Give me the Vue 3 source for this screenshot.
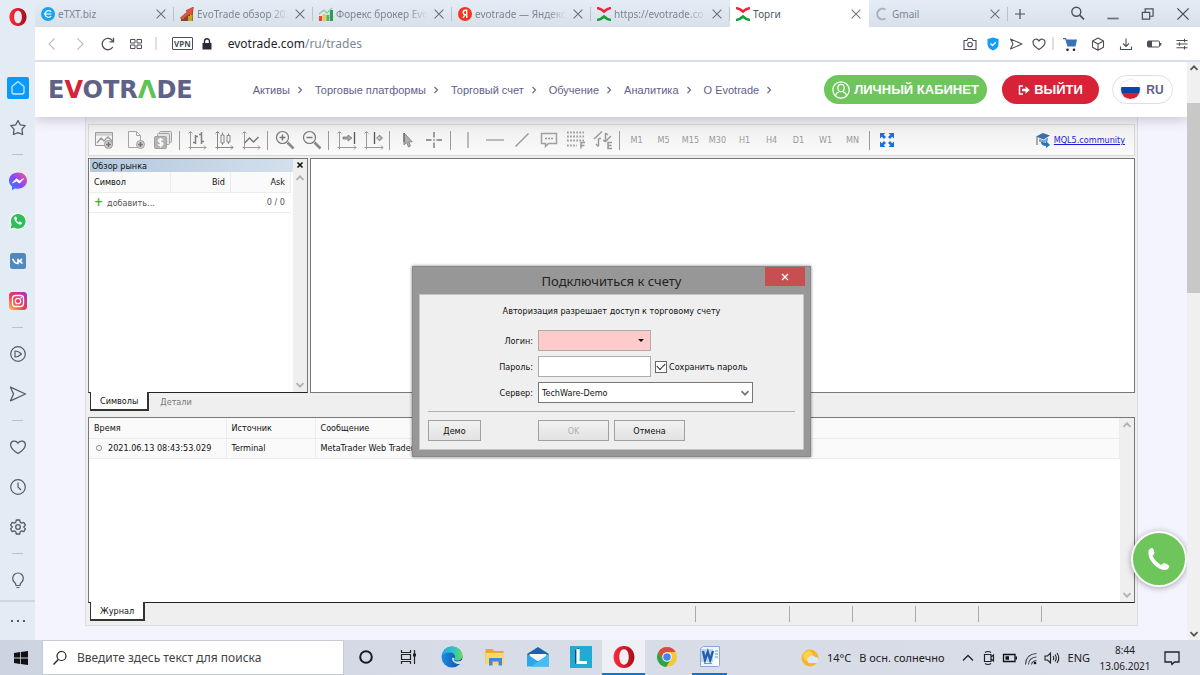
<script setup>
import { ref } from 'vue'

const tabs = [
  { title: 'eTXT.biz', icon: 'fav-etxt' },
  { title: 'EvoTrade обзор 20', icon: 'fav-stairs', fade: true },
  { title: 'Форекс брокер Evo', icon: 'fav-chart', fade: true },
  { title: 'evotrade — Яндекс', icon: 'fav-yandex', fade: true },
  { title: 'https://evotrade.co', icon: 'fav-evo', fade: true },
  { title: 'Торги', icon: 'fav-evo', active: true },
  { title: 'Gmail', icon: 'fav-loading' },
]
const side = [
  { icon: 's-home', label: 'Главная' },
  { icon: 's-star', label: 'Закладки' },
  null,
  { icon: 's-messenger', label: 'Messenger' },
  { icon: 's-whatsapp', label: 'WhatsApp' },
  { icon: 's-vk', label: 'ВКонтакте' },
  { icon: 's-insta', label: 'Instagram' },
  null,
  { icon: 's-player', label: 'Плеер' },
  { icon: 's-send', label: 'Моя лента' },
  null,
  { icon: 's-heart', label: 'Избранное' },
  { icon: 's-clock', label: 'История' },
  { icon: 's-gear', label: 'Настройки' },
  null,
  { icon: 's-bulb', label: 'Советы' },
]
const nav = ['Активы', 'Торговые платформы', 'Торговый счет', 'Обучение', 'Аналитика', 'О Evotrade']
const tools = [
  't-new', 'gap', 't-doc', 't-money', '|', 't-bars', 't-candles', 't-line', '|', 't-zoomin', 't-zoomout', '|',
  't-shift', 't-scroll', '|', 't-cursor', 't-cross', '|', 't-vline', 't-hline', 't-trend', 't-text', 't-fibo', 't-shapes', '|',
]
const frames = ['M1', 'M5', 'M15', 'M30', 'H1', 'H4', 'D1', 'W1', 'MN']
const apps = [
  { icon: 'w-cortana', label: 'Cortana' },
  { icon: 'w-tasks', label: 'Представление задач' },
  { icon: 'w-edge', label: 'Edge' },
  { icon: 'w-folder', label: 'Проводник' },
  { icon: 'w-mail', label: 'Почта' },
  { icon: 'w-l', label: 'L' },
  { icon: 's-opera', label: 'Opera', state: 'current' },
  { icon: 'w-chrome', label: 'Chrome' },
  { icon: 'w-word', label: 'Word', state: 'open' },
]
const login = ref('')
const password = ref('')
const remember = ref(true)
const server = ref('TechWare-Demo')
</script>

<template>
  <div class="screen">
    <svg class="defs" aria-hidden="true">
      <linearGradient id="g-red" x1="0" x2="1"><stop offset="0" stop-color="#ff2a3a" /><stop offset="1" stop-color="#a80d1b" /></linearGradient>
      <linearGradient id="g-msg" x1="0" y1="1" x2="1" y2="0"><stop offset="0" stop-color="#1a8cff" /><stop offset=".5" stop-color="#8a46ff" /><stop offset="1" stop-color="#ff5a78" /></linearGradient>
      <linearGradient id="g-ins" x1="0" y1="1" x2="1" y2="0"><stop offset="0" stop-color="#ffc34d" /><stop offset=".45" stop-color="#f0385a" /><stop offset="1" stop-color="#9a36c8" /></linearGradient>
      <linearGradient id="g-edge" x1="0" x2="1"><stop offset="0" stop-color="#2aa6e6" /><stop offset=".6" stop-color="#2fc4c4" /><stop offset="1" stop-color="#6fdc50" /></linearGradient>
      <linearGradient id="g-edge2" x1="0" x2="1"><stop offset="0" stop-color="#1d8be0" /><stop offset="1" stop-color="#0c4da8" /></linearGradient>

      <symbol id="fav-etxt" viewBox="0 0 14 14"><circle cx="7" cy="7" r="7" fill="#12a5f4" /><path d="M10.200 9.300Q7.500 11.300 5 9.300 3 7 5 4.700 7.500 2.700 10.200 4.700M3 7h7.500" fill="none" stroke="#fff" stroke-width="1.200" /></symbol>
      <symbol id="fav-stairs" viewBox="0 0 14 14"><path d="M1 14v-2h3v-3h3V6h3V3h3v11z" fill="#7b4a2a" /><path d="M8 14V9h2V6h2.500v8z" fill="#c9a227" /><path d="M0 11L7 5 6 3.500 13.500 0 12 8 10.500 6.500 3 12z" fill="#e2533a" stroke="#a53222" stroke-width=".5" /></symbol>
      <symbol id="fav-chart" viewBox="0 0 14 14"><path d="M0 9h3v5H0z" fill="#e2473f" /><path d="M3.700 7h3v7h-3z" fill="#f4c53c" /><path d="M7.300 8h3v6h-3z" fill="#55b26a" /><path d="M10.900 3H14v11h-3.100z" fill="#2f9c55" /><path d="M0 7l5-4 3 3 5-5" fill="none" stroke="#7ccf9a" stroke-width="1.300" /></symbol>
      <symbol id="fav-yandex" viewBox="0 0 14 14"><circle cx="7" cy="7" r="7" fill="#f33422" /><path d="M8.700 11V3.200H7.500Q5.200 3.300 5.200 5.500 5.200 7.300 7 7.700h1.700M7 7.600L5 11" fill="none" stroke="#fff" stroke-width="1.400" /></symbol>
      <symbol id="fav-evo" viewBox="0 0 14 14"><path d="M1 1.200Q4 1.600 7 4.500 10 1.600 13 1.200" fill="none" stroke="#ee2536" stroke-width="2.500" stroke-linecap="round" /><path d="M1 12.800Q4 12.400 7 9.500 10 12.400 13 12.800" fill="none" stroke="#14a038" stroke-width="2.500" stroke-linecap="round" /></symbol>
      <symbol id="fav-loading" viewBox="0 0 14 14"><path d="M10.500 2.600A5.300 5.300 0 1 0 10.500 11.400" fill="none" stroke="#aab2bd" stroke-width="2" /></symbol>

      <symbol id="s-opera" viewBox="0 0 20 20"><path fill-rule="evenodd" fill="url(#g-red)" d="M10 0C4.500 0 0.500 4.300 0.500 10S4.500 20 10 20 19.500 15.700 19.500 10 15.500 0 10 0zM10 3C12.700 3 14.300 6 14.300 10S12.700 17 10 17 5.700 14 5.700 10 7.300 3 10 3z" /></symbol>
      <symbol id="s-home" viewBox="0 0 22 22"><rect width="22" height="22" rx="2" fill="#0a99ff" /><path d="M5 9.500L11 4.500l6 5V15q0 2-2 2H7q-2 0-2-2z" fill="none" stroke="#c7ebff" stroke-width="1.300" /></symbol>
      <symbol id="s-star" viewBox="0 0 22 22"><path d="M11 3.500l2.200 4.300 5 .8-3.200 3.500.6 5.400-4.600-1.800-4.600 1.800.6-5.400L3.800 8.600l5-.8z" fill="none" stroke="#535b64" stroke-width="1.300" stroke-linejoin="round" /></symbol>
      <symbol id="s-messenger" viewBox="0 0 22 22"><path d="M11 2.500c-5.200 0-9 3.600-9 8 0 2.600 1.200 4.500 3 6V20l3-1.600q1.400.3 3 .3c5.200 0 9-3.700 9-8.200s-3.800-8-9-8z" fill="url(#g-msg)" /><path d="M5.500 13L9.500 8.800l3 2.200 4-2.300-4 4.400-3-2.200z" fill="#fff" stroke="#fff" /></symbol>
      <symbol id="s-whatsapp" viewBox="0 0 22 22"><path d="M2.500 19.500L4 15A8 8 0 1 1 7 18.200z" fill="#31bd5a" stroke="#f5fff7" stroke-width="1.200" /><path d="M7.500 7.500Q7.500 12 12.500 14.200q2 .6 2.200-1.400l-2-1-1.200 1q-2-1-2.600-2.700l1-1L9 6.800z" fill="#fff" stroke="#fff" stroke-width=".6" /></symbol>
      <symbol id="s-vk" viewBox="0 0 22 22"><rect x="3" y="3" width="16" height="16" rx="2.500" fill="#5188c0" /><path d="M5.700 8.700Q7.500 13.500 11 13.500V8.700M11 11.400q2.800-.2 3.800-2.700M11.500 11.200q2.700.4 4 2.400" fill="none" stroke="#fff" stroke-width="1.700" /></symbol>
      <symbol id="s-insta" viewBox="0 0 22 22"><rect x="2" y="2" width="18" height="18" rx="3.500" fill="url(#g-ins)" /><rect x="5.500" y="5.500" width="11" height="11" rx="3" fill="none" stroke="#fff" stroke-width="1.300" /><circle cx="11" cy="11" r="2.700" fill="none" stroke="#fff" stroke-width="1.300" /><circle cx="14.200" cy="7.800" r=".8" fill="#fff" /></symbol>
      <symbol id="s-player" viewBox="0 0 22 22"><g fill="none" stroke="#535b64" stroke-width="1.200"><circle cx="11" cy="11" r="7.300" /><path d="M8 8q3.500 0 6.500 3-3 3-6.500 3z" stroke-linejoin="round" /></g></symbol>
      <symbol id="s-send" viewBox="0 0 22 22"><path d="M3.500 4.200L18.500 11l-15 6.800L6.500 11z" fill="none" stroke="#535b64" stroke-width="1.300" stroke-linejoin="round" /></symbol>
      <symbol id="s-heart" viewBox="0 0 22 22"><path d="M11 17.500C6 14.500 3.600 12 3.600 8.800 3.600 5 8.600 3.600 11 7.200 13.400 3.600 18.400 5 18.400 8.800c0 3.200-2.400 5.700-7.400 8.700z" fill="none" stroke="#535b64" stroke-width="1.300" /></symbol>
      <symbol id="s-clock" viewBox="0 0 22 22"><g fill="none" stroke="#535b64" stroke-width="1.200"><circle cx="11" cy="11" r="7.300" /><path d="M11 6.500V11l3 3" /></g></symbol>
      <symbol id="s-gear" viewBox="0 0 22 22"><g fill="none" stroke="#535b64" stroke-width="1.300" stroke-linejoin="round"><path d="M9.300 4h3.400l.5 2.300 1.400.8 2.200-.8 1.600 2.800-1.700 1.900 1.700 1.900-1.600 2.800-2.200-.8-1.400.8-.5 2.300H9.300l-.5-2.300-1.400-.8-2.200.8-1.600-2.800L5.300 11 3.600 9.100l1.600-2.800 2.200.8 1.400-.8z" /><circle cx="11" cy="11" r="2.300" /></g></symbol>
      <symbol id="s-bulb" viewBox="0 0 22 22"><path d="M9 16.500q0-2-1.800-3.500a5.300 5.300 0 1 1 7.600 0Q13 14.500 13 16.500zM9.500 18.500h3" fill="none" stroke="#535b64" stroke-width="1.200" /></symbol>

      <symbol id="n-back" viewBox="0 0 16 16"><path d="M10.500 2.500L5 8l5.500 5.500" fill="none" stroke="#b9bec4" stroke-width="1.100" /></symbol>
      <symbol id="n-fwd" viewBox="0 0 16 16"><path d="M5.500 2.500L11 8l-5.500 5.500" fill="none" stroke="#b9bec4" stroke-width="1.100" /></symbol>
      <symbol id="n-reload" viewBox="0 0 16 16"><path d="M12.800 11A5.700 5.700 0 1 1 12.600 4.800M13.500 1.800v4h-4" fill="none" stroke="#4b5057" stroke-width="1.300" /></symbol>
      <symbol id="n-grid" viewBox="0 0 16 16"><path d="M2.500 3.500h4.500v3.500H2.500zM9 3.500h4.500v3.500H9zM2.500 9h4.500v3.500H2.500zM9 9h4.500v3.500H9z" fill="none" stroke="#4b5057" /></symbol>
      <symbol id="n-lock" viewBox="0 0 16 16"><path d="M3.500 7h9v6.500h-9z" fill="#252c36" /><path d="M5.500 7V5.200a2.500 2.500 0 0 1 5 0V7" fill="none" stroke="#252c36" stroke-width="1.400" /></symbol>
      <symbol id="n-camera" viewBox="0 0 16 16"><g fill="none" stroke="#4b5057" stroke-width="1.100"><path d="M2 4.500h3l1-2h4l1 2h3v9H2z" stroke-linejoin="round" /><circle cx="8" cy="8.500" r="2.300" /></g></symbol>
      <symbol id="n-shield" viewBox="0 0 16 16"><path d="M8 1.500l5.500 1.500v5q0 4.500-5.500 6.500-5.500-2-5.500-6.500V3z" fill="#149cf6" /><path d="M5.500 7.500l2 2 3.300-3.300" fill="none" stroke="#fff" stroke-width="1.300" /></symbol>
      <symbol id="n-send" viewBox="0 0 16 16"><path d="M2.500 3L14 8 2.500 13 5 8z" fill="none" stroke="#4b5057" stroke-width="1.100" stroke-linejoin="round" /></symbol>
      <symbol id="n-heart" viewBox="0 0 16 16"><path d="M8 13.500C4 11 2 9 2 6.200 2 3 6.300 2 8 5c1.700-3 6-2 6 1.200C14 9 12 11 8 13.500z" fill="none" stroke="#4b5057" stroke-width="1.200" /></symbol>
      <symbol id="n-cart" viewBox="0 0 16 16"><path d="M1 2h3l.6 1.600H15L13.500 10.500H5.500L3.200 3.300H1z" fill="#3b6fb6" /><circle cx="5.500" cy="13.800" r="1.300" fill="#222" /><circle cx="12" cy="13.800" r="1.300" fill="#222" /></symbol>
      <symbol id="n-cube" viewBox="0 0 16 16"><path d="M8 2l5.500 3v6.300L8 14.300l-5.500-3V5zM2.500 5L8 8l5.500-3M8 8v6" fill="none" stroke="#4b5057" stroke-width="1.100" stroke-linejoin="round" /></symbol>
      <symbol id="n-down" viewBox="0 0 16 16"><path d="M8 2.500v8M5 7.500l3 3 3-3M2.500 10.500v3h11v-3" fill="none" stroke="#4b5057" stroke-width="1.100" /></symbol>
      <symbol id="n-battery" viewBox="0 0 16 16"><rect x="1.500" y="5" width="12" height="6" rx="1" fill="none" stroke="#4b5057" /><path d="M2 5h4v6H2zM14 7h1.300v2.500H14z" fill="#4b5057" /></symbol>
      <symbol id="n-sliders" viewBox="0 0 16 16"><path d="M2.500 4.500h11M2.500 8h11M2.500 11.800h11M10.500 2.800v3.400M5.500 6.400v3.400M10.500 10v3.400" fill="none" stroke="#4b5057" stroke-width="1.100" /></symbol>
      <symbol id="n-search" viewBox="0 0 16 16"><circle cx="6.500" cy="6" r="4" fill="none" stroke="#4b5057" stroke-width="1.200" /><path d="M9.500 9l3.800 3.800" stroke="#4b5057" stroke-width="1.500" /></symbol>
      <symbol id="n-min" viewBox="0 0 16 16"><path d="M3 12h10" stroke="#6a6f76" stroke-width="1.500" /></symbol>
      <symbol id="n-restore" viewBox="0 0 16 16"><path d="M3 6.500h6.500v6H3zM5.500 6.500V3.500h7v6.500h-3" fill="none" stroke="#4b5057" stroke-width="1.100" /></symbol>
      <symbol id="n-close" viewBox="0 0 16 16"><path d="M3 3l10 10M13 3L3 13" stroke="#4b5057" stroke-width="1.200" /></symbol>
      <symbol id="n-plus" viewBox="0 0 16 16"><path d="M8 3v10M3 8h10" stroke="#4b5057" stroke-width="1.200" /></symbol>

      <symbol id="t-new" viewBox="0 0 22 22"><g fill="none" stroke="#9a9a9a"><path d="M2.500 3.500h17v13h-17z" fill="#f3f3f3" /><path d="M3 5.500h16" stroke-width="2" stroke="#c9c9c9" /><path d="M4 14l4-5 3 3 4-4 4 4" stroke-width="1.300" /><circle cx="15.500" cy="15.500" r="4" fill="#d0d0d0" /><path d="M15.500 13v5M13 15.500h5" stroke-width="1.500" stroke="#777" /></g></symbol>
      <symbol id="t-doc" viewBox="0 0 22 22"><g fill="none" stroke="#a5a5a5"><path d="M3.500 2.500h8l4 4v12h-12z" fill="#f6f6f6" /><path d="M11.500 2.500v4h4" /><circle cx="15.500" cy="15.500" r="4" fill="#d0d0d0" /><path d="M15.500 13v5M13 15.500h5" stroke-width="1.500" stroke="#777" /></g></symbol>
      <symbol id="t-money" viewBox="0 0 22 22"><g fill="#e4e4e4" stroke="#a0a0a0"><rect x="7.500" y="2.500" width="12" height="11" rx="1" /><rect x="5.500" y="4.500" width="12" height="11" rx="1" /><rect x="2.500" y="7.500" width="12" height="12" rx="1" fill="#b4b4b4" /></g><path d="M11 11Q9 9.500 7 10.500q-1.200 1.500.5 2.500l2.500.8q1.500 1.200 0 2.400-2 .8-4-.7M8.600 9v9.500" fill="none" stroke="#fff" stroke-width="1.400" /></symbol>
      <symbol id="t-bars" viewBox="0 0 22 22"><path d="M4.500 3v15.500H20M2.500 18.500h2v2M2.500 4.500l2-2 2 2M18 16.500l2 2-2 2" fill="none" stroke="#999" /><path d="M9.500 6v9M7 13.500h2.500M9.500 7.500H12M15.500 3v12M13 5.500h2.500M15.500 12.500H18" fill="none" stroke="#808080" stroke-width="1.500" /></symbol>
      <symbol id="t-candles" viewBox="0 0 22 22"><path d="M4.500 3v15.500H20M2.500 18.500h2v2M2.500 4.500l2-2 2 2M18 16.500l2 2-2 2M8 6h3v8H8zM9.500 3.500V6M9.500 14v2M14 6.500h3V13h-3zM15.500 4.500v2M15.500 13v2" fill="none" stroke="#858585" /></symbol>
      <symbol id="t-line" viewBox="0 0 22 22"><path d="M4.500 3v15.500H20M2.500 18.500h2v2M2.500 4.500l2-2 2 2M18 16.500l2 2-2 2" fill="none" stroke="#999" /><path d="M4.500 14l5-5 4 4 5-5" fill="none" stroke="#777" stroke-width="1.500" /></symbol>
      <symbol id="t-zoomin" viewBox="0 0 22 22"><circle cx="8.500" cy="8.500" r="6" fill="#f5f5f5" stroke="#777" stroke-width="1.200" /><path d="M13.500 13.500l6 6" stroke="#8a8a8a" stroke-width="2.600" /><path d="M8.500 5.500v6M5.500 8.500h6" stroke="#777" stroke-width="1.500" /></symbol>
      <symbol id="t-zoomout" viewBox="0 0 22 22"><circle cx="8.500" cy="8.500" r="6" fill="#f5f5f5" stroke="#777" stroke-width="1.200" /><path d="M13.500 13.500l6 6" stroke="#8a8a8a" stroke-width="2.600" /><path d="M5.500 8.500h6" stroke="#777" stroke-width="1.500" /></symbol>
      <symbol id="t-shift" viewBox="0 0 22 22"><path d="M4.500 3v15.500H21M2.500 18.500h2v2M2.500 4.500l2-2 2 2M19 16.500l2 2-2 2" fill="none" stroke="#999" /><path d="M19.500 3v12" stroke="#555" stroke-width="1.300" /><path d="M8 8h5V6l4 3-4 3v-2H8z" fill="#aaa" stroke="#777" stroke-width=".8" /></symbol>
      <symbol id="t-scroll" viewBox="0 0 22 22"><path d="M4.500 3v15.500H21M2.500 18.500h2v2M2.500 4.500l2-2 2 2M19 16.500l2 2-2 2" fill="none" stroke="#999" /><path d="M12.500 3v12" stroke="#555" stroke-width="1.300" /><path d="M20 8h-2V6l-3.500 3 3.500 3v-2h2z" fill="#ccc" stroke="#777" stroke-width=".8" /></symbol>
      <symbol id="t-cursor" viewBox="0 0 22 22"><path d="M8 4v12l2.700-2.500 1.800 4.500 2-1-1.800-4.200h3.500z" fill="#b0b0b0" stroke="#888" /><path d="M8 4v9" stroke="#555" /></symbol>
      <symbol id="t-cross" viewBox="0 0 22 22"><path d="M11 3v5.500M11 13.500v5.500M3 11h5.500M13.500 11H19M10.300 11h1.500" stroke="#777" stroke-width="1.400" /></symbol>
      <symbol id="t-vline" viewBox="0 0 22 22"><path d="M11 3v16" stroke="#999" stroke-width="1.300" /></symbol>
      <symbol id="t-hline" viewBox="0 0 22 22"><path d="M2 11h18" stroke="#999" stroke-width="1.300" /></symbol>
      <symbol id="t-trend" viewBox="0 0 22 22"><path d="M4.500 17.500l13-13" stroke="#999" stroke-width="1.500" /></symbol>
      <symbol id="t-text" viewBox="0 0 22 22"><path d="M3.500 4.500h15v10h-8l-3 3v-3h-4z" fill="none" stroke="#a0a0a0" stroke-width="1.500" /><path d="M7 9.500h8" stroke="#999" stroke-width="1.500" stroke-dasharray="2 1" /></symbol>
      <symbol id="t-fibo" viewBox="0 0 22 22"><path d="M2 3.500h17M2 7.500h17M2 11.500h17M2 16.500h10" stroke="#a0a0a0" stroke-width="2" stroke-dasharray="1.800 1.300" /><path d="M16 19.500v-6h4M16 16.500h3.500" fill="none" stroke="#999" stroke-width="1.500" /></symbol>
      <symbol id="t-shapes" viewBox="0 0 22 22"><path d="M2 10L10 2.500M6.500 9.500V17M4 15l2.500 2.500M6.500 9.500H9M13.500 4v9M13.500 4l2.500 2M11 11l2.500 2M14 12l5-5" fill="none" stroke="#999" stroke-width="1.500" /><path d="M20 13.500h-4v6h4M16 16.500h3.500" fill="none" stroke="#999" stroke-width="1.500" /></symbol>
      <symbol id="t-full" viewBox="0 0 22 22"><g fill="#1b6fe0"><path d="M4 4h5.500L7.700 5.800 10 8 8 10 5.800 7.700 4 9.500zM18 4v5.500l-1.800-1.800L14 10l-2-2 2.300-2.200L12.500 4zM4 18v-5.500l1.800 1.800L8 12l2 2-2.300 2.200L9.500 18zM18 18h-5.500l1.800-1.800L12 14l2-2 2.200 2.300 1.800-1.800z" /></g></symbol>
      <symbol id="t-mql" viewBox="0 0 16 16"><path d="M1 4.500L8 1l7 2.500-6.500 4z" fill="#3a6ea8" /><path d="M4 6.500l4.500 1.800L13 5.500v3.500l-4.500 2.500L4 9.500z" fill="#7ba9d6" /><path d="M2 5v8" stroke="#777" stroke-width="1.200" /><path d="M7 9.500q1.500 1.500 4 1.500V9l4 4-4 3v-2q-4 0-5-3z" fill="#2474c0" /></symbol>

      <symbol id="w-start" viewBox="0 0 16 16"><path d="M1 3l6-.9v5.500H1zM7.800 2L15 1v6.600H7.800zM1 8.400h6v5.500L1 13zM7.800 8.400H15V15l-7.200-1z" fill="#111" /></symbol>
      <symbol id="w-cortana" viewBox="0 0 22 22"><circle cx="11" cy="11" r="5.800" fill="none" stroke="#1a1a1a" stroke-width="2" /></symbol>
      <symbol id="w-tasks" viewBox="0 0 22 22"><path d="M3.500 4v2.500h9V4M3.500 18v-2.500h9V18M3.500 8.500h9v5h-9zM16.500 4v14" fill="none" stroke="#222" stroke-width="1.200" /><path d="M15 7.500h3v3h-3z" fill="#222" /></symbol>
      <symbol id="w-edge" viewBox="0 0 22 22"><circle cx="11" cy="11" r="10.500" fill="url(#g-edge2)" /><path d="M.8 9.500C2 3.500 6.500.5 11 .5c6.500 0 10.500 4.500 10.500 9 0 3.500-2.500 5-5 5-2.500 0-3.500-1-3-2 1.500-3-1-6-4.500-6C5 6.500 2.500 8 .8 9.500z" fill="url(#g-edge)" /><path d="M13.500 12.500q-1.500 3 3 3 3 0 5.500-2.500l-1 4.500q-3 1-6 0-4-2-4-5 .5-1.500 2.500 0z" fill="#d5dae6" /></symbol>
      <symbol id="w-folder" viewBox="0 0 22 22"><path d="M1.500 3h7l2 2h9v13h-18z" fill="#e6a932" /><path d="M1.500 7h18.500v11.500H1.500z" fill="#ffd766" /><path d="M5 19.500v-7.500h13v7.500h-3.500v-4h-6v4z" fill="#3d8bd0" /></symbol>
      <symbol id="w-mail" viewBox="0 0 22 22"><path d="M0 8L11 1l11 7v12H0z" fill="#1565b0" /><path d="M2.500 8h17v7h-17z" fill="#f3f7fb" /><path d="M0 8l11 7.500L22 8v12.500H0z" fill="#2ba7ea" /><path d="M22 8v12.500H4z" fill="#44bdf3" /></symbol>
      <symbol id="w-l" viewBox="0 0 22 22"><path d="M0 0h22v22H0z" fill="#24a9d4" /><path d="M5 4v14l4-2.500V2z" fill="#0b4f72" /><path d="M8 3v13.500h9" fill="none" stroke="#fff" stroke-width="3.200" /></symbol>
      <symbol id="w-chrome" viewBox="0 0 22 22"><circle cx="11" cy="11" r="10" fill="#f6c832" /><path d="M2.300 6A10 10 0 0 1 19.700 6H11L6.700 13.500z" fill="#dd4b3e" /><path d="M2.300 6A10 10 0 0 0 10 21l4.800-7.500H6.700z" fill="#2ca14e" /><circle cx="11" cy="11" r="4.800" fill="#fff" /><circle cx="11" cy="11" r="3.800" fill="#4285f4" /></symbol>
      <symbol id="w-word" viewBox="0 0 22 22"><path d="M1.500 2.500l3-2h16v19l-1 1h-18z" fill="#eef5fd" stroke="#8aa9d0" /><path d="M2 3h12v13H2z" fill="#bdd6f0" /><path d="M4 5l2 9L8.800 6l2.400 8L14 5" fill="none" stroke="#1f5fac" stroke-width="2.400" /><path d="M16 5h3M16 8h3M16 11h3M5 17.500h8" stroke="#6f9cd0" /><path d="M14 14l4-1 2 2v4l-3 1-3-3z" fill="#fff" /></symbol>
      <symbol id="w-sun" viewBox="0 0 18 18"><circle cx="9" cy="9" r="8.500" fill="#fbb42a" /><circle cx="7" cy="7" r="5" fill="#fdd24e" /><path d="M8 14a3 3 0 0 1 0-5.500 3.500 3.500 0 0 1 6-.5 3 3 0 0 1 1 6z" fill="#d9ebfb" /></symbol>
      <symbol id="w-up" viewBox="0 0 16 16"><path d="M3 10.500l5-5 5 5" fill="none" stroke="#222" stroke-width="1.300" /></symbol>
      <symbol id="w-cam" viewBox="0 0 16 16"><path d="M3.500 4.500h6.500v7H3.500zM10 7l2.500-2v6L10 9M4 2.500q3-2 6 0M4 13.500q3 2 6 0" fill="none" stroke="#222" stroke-width="1.200" /></symbol>
      <symbol id="w-bat" viewBox="0 0 16 16"><path d="M1.500 4.500h11.500v7H1.500z" fill="none" stroke="#111" stroke-width="1.300" /><path d="M3.500 6.300h3.500v3.500H3.500zM13.500 6.500H15v3h-1.500z" fill="#111" /></symbol>
      <symbol id="w-wifi" viewBox="0 0 16 16"><path d="M2.500 14.500Q3 4 13.500 3.500M5.500 14.500Q6 7.500 13.500 7M8.500 14.500Q9 11 13.500 10.500" fill="none" stroke="#444" stroke-width="1.100" /><circle cx="12" cy="13" r="1.300" fill="#111" /></symbol>
      <symbol id="w-vol" viewBox="0 0 16 16"><path d="M1 6h2.500l3-3v10l-3-3H1zM9 6q1.500 2 0 4M11 4.500q2.500 3.500 0 7M13 3q3.500 5 0 10" fill="none" stroke="#222" stroke-width="1.100" /></symbol>
      <symbol id="w-note" viewBox="0 0 18 18"><path d="M2 3h14v10h-4.500L9 15.500 8.500 13H2z" fill="none" stroke="#222" stroke-width="1.300" /></symbol>
      <symbol id="c-up" viewBox="0 0 10 10"><path d="M1.500 6.800L5 3.300l3.500 3.500" fill="none" stroke="currentColor" stroke-width="1.700" /></symbol>
      <symbol id="c-down" viewBox="0 0 10 10"><path d="M1.500 3.200L5 6.700l3.500-3.500" fill="none" stroke="currentColor" stroke-width="1.700" /></symbol>
    </svg>

    <div class="browser">
      <aside class="sidebar">
        <button class="opera" aria-label="Opera"><svg class="i18"><use href="#s-opera" /></svg></button>
        <template v-for="(s, i) in side" :key="i">
          <button v-if="s" class="side-item" :aria-label="s.label"><svg class="i22"><use :href="'#' + s.icon" /></svg></button>
          <div v-else class="side-line"></div>
        </template>
        <button class="dots" aria-label="Ещё"><i></i><i></i><i></i></button>
      </aside>

      <div class="window">
        <div class="tabbar">
          <div v-for="t in tabs" :key="t.title" class="tab" :class="{ active: t.active }">
            <svg class="i14"><use :href="'#' + t.icon" /></svg>
            <span class="tab-title" :class="{ fade: t.fade }">{{ t.title }}</span>
            <button class="tab-close" aria-label="Закрыть"><svg class="i14"><use href="#n-close" /></svg></button>
          </div>
          <button class="plus" aria-label="Новая вкладка"><svg class="i16"><use href="#n-plus" /></svg></button>
          <div class="wincontrols">
            <button v-for="n in ['search', 'min', 'restore', 'close']" :key="n" :aria-label="n"><svg class="i18"><use :href="'#n-' + n" /></svg></button>
          </div>
        </div>

        <div class="addressbar">
          <button v-for="n in ['back', 'fwd', 'reload', 'grid']" :key="n" class="nav-btn" :aria-label="n"><svg class="i16"><use :href="'#n-' + n" /></svg></button>
          <span class="vsep"></span>
          <span class="vpn">VPN</span>
          <svg class="i16 lock"><use href="#n-lock" /></svg>
          <div class="url"><b>evotrade.com</b>/ru/trades</div>
          <div class="tight">
            <button v-for="n in ['camera', 'shield', 'send', 'heart']" :key="n" :aria-label="n"><svg class="i16"><use :href="'#n-' + n" /></svg></button>
          </div>
          <span class="vsep thin"></span>
          <div class="wide">
            <button v-for="n in ['cart', 'cube', 'down', 'battery', 'sliders']" :key="n" :aria-label="n"><svg class="i16"><use :href="'#n-' + n" /></svg></button>
          </div>
        </div>

        <div class="viewport">
          <div class="page">
            <header class="site-header">
              <a class="logo" href="#" aria-label="EVOTRADE">E<span class="red">V</span>OTR<span class="green">Λ</span>DE</a>
              <nav>
                <a v-for="n in nav" :key="n" href="#">{{ n }}<svg class="chev" viewBox="0 0 6 8"><path d="M1.500 1l3 3-3 3" fill="none" stroke="#6b6d92" stroke-width="1.200" /></svg></a>
              </nav>
              <a class="pill cabinet" href="#">
                <svg class="i18" viewBox="0 0 18 18"><g fill="none" stroke="#fff" stroke-width="1.200"><circle cx="9" cy="9" r="8.200" /><ellipse cx="9" cy="7" rx="3.200" ry="3.700" /><path d="M3.500 14.800Q4 11.500 7 11M14.500 14.800Q14 11.500 11 11" /></g></svg>
                ЛИЧНЫЙ КАБИНЕТ
              </a>
              <a class="pill exit" href="#">
                <svg class="i12" viewBox="0 0 12 12"><path d="M5 2H1.500v8H5" fill="none" stroke="#fff" stroke-width="1.500" /><path d="M4 4.700h3.500V2.300L11.700 6 7.500 9.700V7.300H4z" fill="#fff" /></svg>
                ВЫЙТИ
              </a>
              <button class="lang"><span class="flag"></span>RU</button>
            </header>

            <main class="terminal">
              <div class="toolbar">
                <template v-for="(t, i) in tools" :key="i">
                  <span v-if="t === '|'" class="tsep"></span>
                  <span v-else-if="t === 'gap'" class="tgap"></span>
                  <button v-else class="tool" :aria-label="t.slice(2)"><svg class="i22"><use :href="'#' + t" /></svg></button>
                </template>
                <button v-for="f in frames" :key="f" class="tool frame">{{ f }}</button>
                <span class="tsep"></span>
                <button class="tool" aria-label="fullscreen"><svg class="i22"><use href="#t-full" /></svg></button>
                <a class="mql" href="#"><svg class="i16"><use href="#t-mql" /></svg><span>MQL5.community</span></a>
              </div>

              <div class="workspace">
                <section class="watch-col">
                  <div class="watch">
                    <div class="watch-main">
                      <h2>Обзор рынка</h2>
                      <table class="quotes">
                        <thead><tr><th>Символ</th><th class="bid">Bid</th><th class="ask">Ask</th></tr></thead>
                        <tbody><tr><td colspan="2"><span class="add">+</span>добавить...</td><td class="ask">0 / 0</td></tr></tbody>
                      </table>
                    </div>
                    <div class="rail">
                      <button class="watch-close" aria-label="Закрыть"><svg class="i8" viewBox="0 0 8 8"><path d="M1.500 1.500l5 5M6.500 1.500l-5 5" stroke="#111" stroke-width="1.600" /></svg></button>
                      <svg class="i10"><use href="#c-up" /></svg>
                      <svg class="i10 end"><use href="#c-down" /></svg>
                    </div>
                  </div>
                  <div class="ptabs"><button class="ptab on">Символы</button><button class="ptab">Детали</button></div>
                </section>
                <section class="chart"></section>
              </div>

              <section class="journal">
                <div class="log-wrap">
                  <table class="log">
                    <thead><tr><th class="time">Время</th><th class="src">Источник</th><th>Сообщение</th></tr></thead>
                    <tbody><tr><td><span class="dot"></span>2021.06.13 08:43:53.029</td><td>Terminal</td><td>MetaTrader Web Trader</td></tr></tbody>
                  </table>
                </div>
                <div class="rail">
                  <svg class="i10"><use href="#c-up" /></svg>
                  <svg class="i10 end"><use href="#c-down" /></svg>
                </div>
              </section>
              <div class="statusbar">
                <button class="ptab on">Журнал</button>
                <div class="cells"><i class="first"></i><i></i><i></i><i></i><i></i><i class="last"></i></div>
              </div>
            </main>

            <form class="dialog" role="dialog" aria-labelledby="dlg-title" @submit.prevent>
              <div class="dlg-head">
                <h1 id="dlg-title">Подключиться к счету</h1>
                <button type="button" class="dlg-close" aria-label="Закрыть"><svg class="i8" viewBox="0 0 8 8"><path d="M1 1l6 6M7 1L1 7" stroke="#fff" stroke-width="1.300" /></svg></button>
              </div>
              <div class="dlg-body">
                <p>Авторизация разрешает доступ к торговому счету</p>
                <div class="fields">
                  <label for="login">Логин:</label>
                  <div class="combo"><input id="login" v-model="login" class="need" /><i class="tri"></i></div>
                  <label for="pass">Пароль:</label>
                  <div class="pass-row">
                    <input id="pass" v-model="password" type="password" />
                    <input id="keep" v-model="remember" type="checkbox" /><label for="keep">Сохранить пароль</label>
                  </div>
                  <label for="server">Сервер:</label>
                  <div class="select"><select id="server" v-model="server"><option>TechWare-Demo</option></select><svg class="i10"><use href="#c-down" /></svg></div>
                </div>
                <div class="actions">
                  <button type="button" class="demo">Демо</button>
                  <button type="submit" class="act" disabled>OK</button>
                  <button type="button" class="act">Отмена</button>
                </div>
              </div>
            </form>
            <button class="call" aria-label="Позвонить"><svg class="i26" viewBox="0 0 26 26"><path d="M2.500 4.500Q4 1.500 6.500 2q1.500 1.500 2 5-.3 1.500-2 2.500 3 6.500 8.500 9.500l3-2q3 .5 5 2.500 1 2-2 4Q15 25.500 8 18.500 1.500 12 2.500 4.500z" fill="#fff" /></svg></button>
          </div>
          <div class="scrollbar">
            <svg class="i10"><use href="#c-up" /></svg>
            <div class="thumb"></div>
            <svg class="i10 end"><use href="#c-down" /></svg>
          </div>
        </div>
      </div>
    </div>

    <footer class="taskbar">
      <button class="start" aria-label="Пуск"><svg class="i16"><use href="#w-start" /></svg></button>
      <label class="search">
        <svg class="i16" viewBox="0 0 16 16"><circle cx="9.500" cy="6" r="4.500" fill="none" stroke="#222" stroke-width="1.200" /><path d="M6.300 9.500L1.500 14.500" stroke="#222" stroke-width="1.300" /></svg>
        <input type="text" placeholder="Введите здесь текст для поиска" aria-label="Поиск" />
      </label>
      <button v-for="a in apps" :key="a.label" class="app" :class="a.state" :aria-label="a.label"><svg class="i22"><use :href="'#' + a.icon" /></svg></button>
      <div class="tray">
        <div class="weather"><svg class="i18"><use href="#w-sun" /></svg><span>14°C</span><span>В осн. солнечно</span></div>
        <button v-for="n in ['up', 'cam', 'bat', 'wifi', 'vol']" :key="n" class="tray-btn" :aria-label="n"><svg class="i16"><use :href="'#w-' + n" /></svg></button>
        <span class="eng">ENG</span>
        <div class="clock"><span>8:44</span><span>13.06.2021</span></div>
        <button class="note" aria-label="Уведомления"><svg class="i18"><use href="#w-note" /></svg></button>
      </div>
    </footer>
  </div>
</template>

<style>
html, body { margin: 0; background: #f4f4fe; }
</style>

<style scoped>
* { box-sizing: border-box; }
.screen { display: flex; flex-direction: column; height: 100vh; overflow: hidden; font-family: "Noto Sans", "Open Sans", sans-serif; color: #222; }
.defs { position: absolute; width: 0; height: 0; }
button { border: 0; padding: 0; margin: 0; background: none; font: inherit; color: inherit; display: flex; align-items: center; justify-content: center; }
a { text-decoration: none; color: inherit; }
svg { flex: none; display: block; }
.i8 { width: 8px; height: 8px; }
.i10 { width: 10px; height: 10px; }
.i12 { width: 12px; height: 12px; }
.i14 { width: 14px; height: 14px; }
.i16 { width: 16px; height: 16px; }
.i18 { width: 18px; height: 18px; }
.i22 { width: 22px; height: 22px; }
.i26 { width: 26px; height: 26px; }

.browser { flex: 1; min-height: 0; display: flex; }
.sidebar { width: 35px; flex: none; background: #e3ecf4; display: flex; flex-direction: column; }
.opera { height: 34px; margin-bottom: 34px; }
.side-item { height: 40px; flex: none; }
.side-line { height: 13px; flex: none; display: flex; align-items: center; justify-content: center; }
.side-line::before { content: ""; width: 11px; height: 1px; background: #b5c2d0; }
.dots { flex: 1; border-top: 2px solid #ccd5e2; gap: 4px; }
.dots i { width: 2px; height: 2px; background: #535b64; }

.window { flex: 1; min-width: 0; display: flex; flex-direction: column; }
.tabbar { height: 27px; flex: none; display: flex; background: linear-gradient(#e5ecf5, #d8e0ea); }
.tab { flex: 0 1 139px; min-width: 0; display: flex; align-items: center; gap: 3px; padding: 0 5px 0 6px; position: relative; font-size: 10px; color: #7b8795; }
.tab::after { content: ""; position: absolute; right: 0; top: 7px; width: 1px; height: 14px; background: #b9c2cd; }
.tab-title { flex: 1; min-width: 0; white-space: nowrap; }
.tab-title.fade { mask-image: linear-gradient(90deg, #000 78%, transparent); }
.tab-close { width: 16px; opacity: .8; }
.tab.active { background: #fff; color: #4d5865; }
.tab.active::after { display: none; }
.plus { width: 24px; }
.wincontrols { margin-left: auto; display: flex; }
.wincontrols button { width: 35px; }
.addressbar { height: 35px; flex: none; display: flex; align-items: center; background: #fff; border-bottom: 2px solid #d8dfe8; padding: 0 4px 0 3px; }
.nav-btn { width: 28px; }
.vsep { width: 2px; height: 13px; background: #dcdfe3; margin: 0 15px 0 5px; }
.vsep.thin { margin: 0 2px; }
.vpn { height: 13px; padding: 0 1px; border: 1px solid #4b5057; border-radius: 1px; font-size: 8px; line-height: 11px; font-weight: 700; color: #4b5057; }
.lock { margin-left: 6px; }
.url { flex: 1; margin-left: 13px; font-size: 12px; color: #7b8795; }
.url b { font-weight: 400; color: #1d232b; }
.tight, .wide { display: flex; }
.tight button { width: 23px; }
.wide button { width: 28px; }

.viewport { flex: 1; min-height: 0; display: flex; }
.page { flex: 1; min-width: 0; position: relative; overflow: hidden; background: #f4f4fe; display: flex; flex-direction: column; }
.site-header { height: 55px; flex: none; background: #fff; box-shadow: 0 2px 12px rgba(40, 40, 80, .25); position: relative; display: flex; align-items: center; padding: 0 14px 0 13px; }
.logo { font: 700 24px/28px "DejaVu Sans", sans-serif; color: #5f6187; }
.red { color: #d82238; }
.green { color: #5fc255; }
nav { flex: 1; display: flex; gap: 12px; margin-left: 60px; font: 11px/16px "Liberation Sans", Arial, sans-serif; color: #5f6187; white-space: nowrap; }
nav a { display: flex; align-items: center; gap: 7px; }
.chev { width: 6px; height: 8px; }
.pill { height: 29px; border-radius: 15px; display: flex; align-items: center; justify-content: center; gap: 4px; color: #fff; font: 700 13px/16px "Liberation Sans", Arial, sans-serif; white-space: nowrap; }
.cabinet { background: #6dc55c; width: 163px; }
.exit { background: #d82238; width: 97px; margin: 0 13px 0 15px; }
.lang { height: 29px; width: 61px; border: 1px solid #dedee6; border-radius: 15px; gap: 6px; font: 700 12px/16px "Liberation Sans", Arial, sans-serif; color: #5f6187; }
.flag { width: 19px; height: 19px; border-radius: 50%; background: linear-gradient(#fff 36%, #1140a8 36% 66%, #d62030 66%); box-shadow: 0 0 2px rgba(0, 0, 0, .3); }

.terminal, .dialog { font-family: "DejaVu Sans Condensed", "Noto Sans", sans-serif; font-size: 9px; color: #111; }
.terminal { flex: 1; min-height: 0; margin: 0 49px 14px 50px; background: #efefef; border: 1px solid #dcdce2; border-top: 0; padding: 7px 2px 4px; display: flex; flex-direction: column; }
.toolbar { height: 32px; flex: none; border: 1px solid #d8d8d8; background: linear-gradient(#f0f0f0, #fafafa); display: flex; align-items: center; padding: 0 9px 0 1px; }
.tool { width: 27px; height: 100%; flex: none; }
.frame { color: #999; }
.tgap { width: 5px; }
.tsep { width: 7px; height: 19px; display: flex; justify-content: center; }
.tsep::before { content: ""; width: 1px; background: #999; }
.mql { margin-left: auto; display: flex; align-items: center; gap: 3px; color: #1d1dd8; text-decoration: underline; }
.workspace { flex: 260 1 0; min-height: 0; display: flex; gap: 2px; margin-top: 2px; }
.watch-col { width: 220px; flex: none; display: flex; flex-direction: column; }
.watch { flex: 1; min-height: 0; border: 1px solid #777; border-bottom-color: #222; background: #fff; display: flex; }
.watch-main { flex: 1; min-width: 0; }
h2 { margin: 0 0 0 1px; height: 13px; padding-left: 2px; background: linear-gradient(90deg, #b4c8de, #d3dfec); font-size: 9px; line-height: 14px; font-weight: 400; }
table { border-collapse: collapse; table-layout: fixed; font-size: 9px; text-align: left; }
th, td { font-weight: 400; padding: 0 5px; height: 20px; line-height: 14px; border-right: 1px solid #ececec; border-bottom: 1px solid #ececec; white-space: nowrap; overflow: hidden; }
th { background: #fafafa; }
.quotes { width: 202px; }
.quotes .bid, .quotes .ask { width: 60px; text-align: right; }
.quotes td { border-right-color: #fff; color: #555; }
.add { color: #35b51e; font-weight: 700; margin-right: 4px; font-size: 12px; }
.rail { width: 14px; background: #efefef; display: flex; flex-direction: column; align-items: center; color: #b0b0b0; padding: 2px 0; }
.rail .end { margin-top: auto; }
.watch-close { margin-bottom: 4px; }
.ptabs { height: 24px; flex: none; display: flex; padding-left: 2px; }
.ptab { height: 18px; padding: 0 11px; color: #777; }
.ptab.on { background: #fff; border: solid #333; border-width: 0 2px 2px 1px; margin-top: -1px; height: 19px; padding: 0 9px; color: #111; }
.chart { flex: 1; border: 1px solid #777; background: #fff; margin-bottom: 24px; }
.journal { flex: 184 1 0; min-height: 0; border: 1px solid #777; border-bottom-color: #222; background: #fff; display: flex; }
.log-wrap { flex: 1; min-width: 0; }
.log { width: 100%; }
.log td { background: #fafafa; }
.log .time { width: 137px; }
.log .src { width: 89px; }
.dot { display: inline-block; width: 6px; height: 6px; border: 1px solid #888; border-radius: 50%; margin: 0 6px 0 2px; }
.statusbar { height: 18px; flex: none; display: flex; padding-left: 2px; justify-content: space-between; }
.cells { display: flex; padding: 3px 0 0; height: 19px; }
.cells i { width: 63px; border-left: 1px solid #aaa; }
.cells .first { width: 94px; }
.cells .last { width: 94px; }

.dialog { position: absolute; top: 204px; left: 50%; width: 399px; margin-left: -199px; background: #979797; border: 1px solid #8a8a8a; box-shadow: 0 0 3px rgba(0, 0, 0, .5); padding: 0 6px 6px; display: flex; flex-direction: column; }
.dlg-head { height: 27px; display: flex; justify-content: center; }
h1 { margin: 0; font: 400 13px/28px "Noto Sans", sans-serif; color: #222; }
.dlg-close { position: absolute; right: 5px; top: 0; width: 40px; height: 19px; background: #c84f50; }
.dlg-body { background: #efefef; border: 1px solid #c4c4c4; padding: 8px; }
.dlg-body p { margin: 0; text-align: center; line-height: 16px; }
.fields { display: grid; grid-template-columns: 105px 1fr; column-gap: 5px; row-gap: 5px; margin-top: 11px; align-items: center; }
.fields > label { text-align: right; }
.combo { position: relative; width: 113px; }
.fields input:not([type="checkbox"]), .select select { display: block; width: 113px; height: 21px; border: 1px solid #acacac; background: #fff; font: inherit; padding: 0 3px; margin: 0; color: #111; }
.fields .need { background: #ffcaca !important; }
.tri { position: absolute; right: 7px; top: 9px; border: 3px solid transparent; border-top-color: #111; border-bottom: 0; }
.pass-row { display: flex; align-items: center; }
.pass-row input[type="checkbox"] { appearance: none; width: 12px; height: 12px; border: 1px solid #666; background: #fff; margin: 0 2px 0 4px; display: grid; place-items: center; }
.pass-row input[type="checkbox"]:checked::before { content: ""; width: 7px; height: 4px; border: solid #222; border-width: 0 0 1px 1px; transform: rotate(-45deg); margin-top: -2px; }
.select { position: relative; width: 215px; }
.select select { width: 100%; appearance: none; border-color: #777; }
.select svg { position: absolute; right: 3px; top: 6px; color: #777; }
.actions { margin-top: 8px; border-top: 1px solid #b0b0b0; padding-top: 8px; display: flex; gap: 5px; }
.actions button { height: 21px; border: 1px solid #a0a0a0; background: linear-gradient(#f2f2f2, #e2e2e2); }
.demo { width: 53px; margin-right: 52px; }
.act { width: 71px; }
.actions button:disabled { color: #b0b0b0; }

.call { position: absolute; right: 0; bottom: 53px; width: 56px; height: 56px; border-radius: 50%; background: #6dc55c; border: 2px solid #fff; box-shadow: 0 1px 6px rgba(0, 0, 0, .35); }
.scrollbar { width: 13px; background: #f0f0f0; display: flex; flex-direction: column; align-items: center; padding: 1px 0; color: #555; }
.thumb { width: 100%; height: 190px; background: #c8c8c8; margin-top: 30px; }
.scrollbar .end { margin-top: auto; }

.taskbar { height: 35px; flex: none; display: flex; background: linear-gradient(90deg, #cdd4e1, #d7dce7 40%, #d9dde8); }
.start { width: 42px; }
.search { width: 302px; display: flex; align-items: center; gap: 9px; padding-left: 9px; background: #fff; border: 1px solid #c6cad2; }
.search input { flex: 1; min-width: 0; border: 0; outline: 0; padding: 0; background: none; font: inherit; font-size: 12px; }
.search input::placeholder { color: #444; opacity: 1; }
.app { width: 43px; border-bottom: 2px solid transparent; }
.app.current { background: #eef0f5; border-color: #0a78d4; }
.app.open { background: linear-gradient(#0a78d4, #0a78d4) center bottom / 35px 2px no-repeat; background-origin: border-box; background-clip: border-box; }
.tray { margin-left: auto; display: flex; align-items: center; font-size: 11px; }
.weather { display: flex; align-items: center; gap: 8px; margin-right: 13px; white-space: nowrap; }
.tray-btn { width: 21px; }
.eng { margin: 0 11px 0 5px; }
.clock { width: 48px; display: flex; flex-direction: column; align-items: center; font-size: 10px; line-height: 16px; }
.note { width: 45px; margin-right: 6px; }
</style>
